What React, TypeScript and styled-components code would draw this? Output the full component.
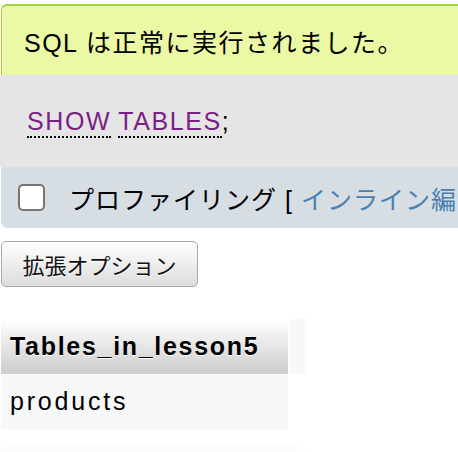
import styled, { createGlobalStyle } from 'styled-components';

const GlobalStyle = createGlobalStyle`
  html, body {
    margin: 0;
    padding: 0;
    background: #ffffff;
    overflow: hidden;
  }
  body {
    font-family: "Liberation Sans", "Noto Sans CJK JP", sans-serif;
    font-size: 25px;
    color: #000;
  }
`;

const Page = styled.div`
  width: 640px;
  padding: 4px 0 0 1px;
`;

const SuccessBox = styled.div`
  height: 69px;
  display: flex;
  align-items: center;
  padding-left: 22px;
  letter-spacing: 1.5px;
  background: #ebf8a4;
  border-top: 2px solid #a2d246;
  border-left: 1px solid #a2d246;
  border-radius: 6px 6px 0 0;
`;

const QueryBox = styled.div`
  height: 92px;
  display: flex;
  align-items: center;
  padding-left: 27px;
  margin-left: -1px;
  background: #e5e5e5;
`;

const Keyword = styled.a`
  color: #7b1f86;
  text-decoration: none;
  letter-spacing: 1.6px;
  border-bottom: 2px dotted #000;
  line-height: 1;
  padding-bottom: 1px;
`;

const Tools = styled.div`
  height: 61px;
  display: flex;
  align-items: center;
  gap: 24px;
  padding-left: 17px;
  letter-spacing: 1px;
  background: #d6dde3;
  border-radius: 0 0 0 7px;
  white-space: nowrap;
`;

const Check = styled.span`
  width: 23px;
  height: 23px;
  border: 2px solid #767676;
  border-radius: 5px;
  background: #fff;
  flex: none;
`;

const InlineLink = styled.a`
  color: #4a80b1;
  text-decoration: none;
  margin-left: 8px;
`;

const OptionButton = styled.button`
  margin-top: 13px;
  width: 197px;
  height: 46px;
  font-family: "Noto Sans CJK JP", sans-serif;
  font-size: 22px;
  color: #111;
  background: linear-gradient(#ffffff, #dcdcdc);
  border: 1px solid #aaaaaa;
  border-radius: 5px;
  text-shadow: 0 1px 0 #fff;
  padding: 0;
`;

const TableWrap = styled.div`
  margin-top: 32px;
  display: flex;
  align-items: flex-start;
`;

const Table = styled.table`
  border-collapse: collapse;
`;

const Th = styled.th`
  width: 269px;
  height: 55px;
  padding: 0 9px;
  text-align: left;
  font-weight: bold;
  letter-spacing: 1.7px;
  background: linear-gradient(#ffffff, #cccccc);
  text-shadow: 0 1px 0 #fff;
`;

const Td = styled.td`
  height: 55px;
  padding: 0 9px;
  letter-spacing: 2.8px;
  background: #f7f8fa;
`;

const Spacer = styled.div`
  width: 16px;
  height: 55px;
  margin-left: 2px;
  background: #f7f8fa;
`;

const ShadowCard = styled.div`
  margin-top: 26px;
  width: 300px;
  height: 40px;
  background: #fff;
  box-shadow: 0 0 18px rgba(0, 0, 0, 0.06);
  border-radius: 6px;
`;

const App = () => {
  return (
    <>
      <GlobalStyle />
      <Page>
        <SuccessBox>SQL は正常に実行されました。</SuccessBox>
        <QueryBox>
          <span>
            <Keyword>SHOW</Keyword> <Keyword>TABLES</Keyword>;
          </span>
        </QueryBox>
        <Tools>
          <Check />
          <span>
            プロファイリング [<InlineLink>インライン編集</InlineLink> ] [ 編集 ]
          </span>
        </Tools>
        <OptionButton>拡張オプション</OptionButton>
        <TableWrap>
          <Table>
            <thead>
              <tr>
                <Th>Tables_in_lesson5</Th>
              </tr>
            </thead>
            <tbody>
              <tr>
                <Td>products</Td>
              </tr>
            </tbody>
          </Table>
          <Spacer />
        </TableWrap>
        <ShadowCard />
      </Page>
    </>
  );
};

export default App;
